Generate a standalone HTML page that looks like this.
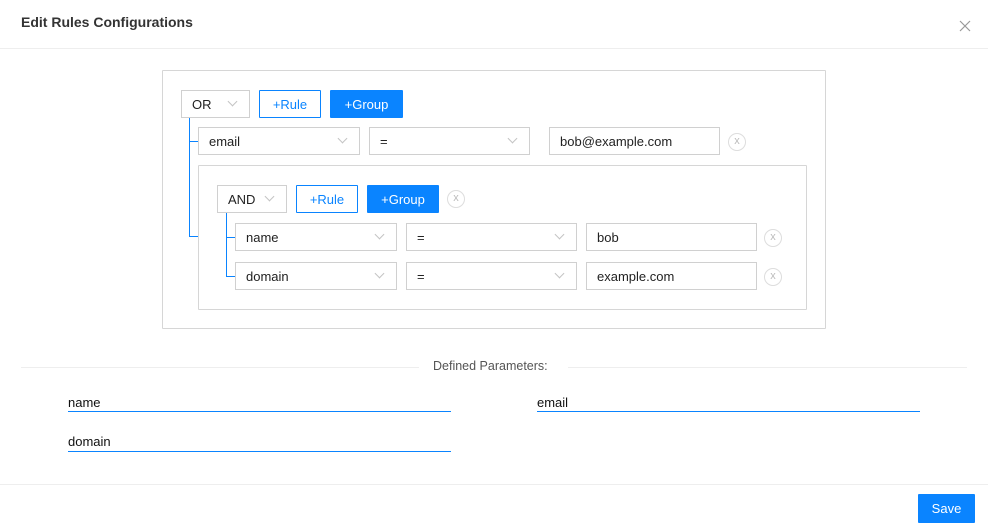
<!DOCTYPE html>
<html><head><meta charset="utf-8"><style>
*{box-sizing:border-box;margin:0;padding:0}
body{width:988px;height:531px;background:#fff;font-family:"Liberation Sans",sans-serif;font-size:13px;color:#333;position:relative;overflow:hidden}
.a{position:absolute}
.box{position:absolute;border:1px solid #d6d6d6;background:#fff;border-radius:1px}
.sel{position:absolute;border:1px solid #d0d0d0;height:28px;line-height:28px;padding-left:10px;color:#222}
.sel::after{content:"";position:absolute;right:13px;top:7px;width:6px;height:6px;border-right:1px solid #c4c4c4;border-bottom:1px solid #c4c4c4;transform:rotate(45deg)}
.btn{position:absolute;height:28px;line-height:27px;text-align:center;border:1px solid #0a84ff;color:#0a84ff;border-radius:1px}
.btnp{background:#0a84ff;color:#fff}
.inp{position:absolute;border:1px solid #d0d0d0;height:28px;line-height:28px;padding-left:10px;color:#222}
.x{position:absolute;width:18px;height:18px;border:1px solid #ddd;border-radius:50%;color:#bbb;font-size:11px;line-height:15px;text-align:center}
.vl{position:absolute;width:1px;background:#0a84ff}
.hl{position:absolute;height:1px;background:#0a84ff}
.pl{position:absolute;font-size:13px;color:#111}
.ul{position:absolute;height:1px;background:#0a84ff}
</style></head><body>
<div class="a" style="left:21px;top:14px;font-weight:bold;font-size:14px;color:#333">Edit Rules Configurations</div>
<svg class="a" style="left:959px;top:20px" width="12" height="12"><path d="M1 1L11 11M11 1L1 11" stroke="#999" stroke-width="1.2"/></svg>
<div class="a" style="left:0;top:48px;width:988px;height:1px;background:#eee"></div>

<div class="box" style="left:162px;top:70px;width:664px;height:259px"></div>
<div class="vl" style="left:189px;top:117px;height:120px"></div>
<div class="hl" style="left:189px;top:141px;width:9px"></div>
<div class="hl" style="left:189px;top:236px;width:9px"></div>
<div class="sel" style="left:181px;top:90px;width:69px">OR</div>
<div class="btn" style="left:259px;top:90px;width:62px">+Rule</div>
<div class="btn btnp" style="left:330px;top:90px;width:73px">+Group</div>
<div class="sel" style="left:198px;top:127px;width:162px">email</div>
<div class="sel" style="left:369px;top:127px;width:161px">=</div>
<div class="inp" style="left:549px;top:127px;width:171px">bob@example.com</div>
<div class="x" style="left:728px;top:133px">x</div>

<div class="box" style="left:198px;top:165px;width:609px;height:145px"></div>
<div class="vl" style="left:226px;top:213px;height:64px"></div>
<div class="hl" style="left:226px;top:237px;width:9px"></div>
<div class="hl" style="left:226px;top:276px;width:9px"></div>
<div class="sel" style="left:217px;top:185px;width:70px">AND</div>
<div class="btn" style="left:296px;top:185px;width:62px">+Rule</div>
<div class="btn btnp" style="left:367px;top:185px;width:72px">+Group</div>
<div class="x" style="left:447px;top:190px">x</div>
<div class="sel" style="left:235px;top:223px;width:162px">name</div>
<div class="sel" style="left:406px;top:223px;width:171px">=</div>
<div class="inp" style="left:586px;top:223px;width:171px">bob</div>
<div class="x" style="left:764px;top:229px">x</div>
<div class="sel" style="left:235px;top:262px;width:162px">domain</div>
<div class="sel" style="left:406px;top:262px;width:171px">=</div>
<div class="inp" style="left:586px;top:262px;width:171px">example.com</div>
<div class="x" style="left:764px;top:268px">x</div>

<div class="a" style="left:21px;top:367px;width:398px;height:1px;background:#eee"></div>
<div class="a" style="left:568px;top:367px;width:399px;height:1px;background:#eee"></div>
<div class="a" style="left:433px;top:359px;font-size:12.5px;color:#555">Defined Parameters:</div>
<div class="pl" style="left:68px;top:395px">name</div>
<div class="ul" style="left:68px;top:411px;width:383px"></div>
<div class="pl" style="left:537px;top:395px">email</div>
<div class="ul" style="left:537px;top:411px;width:383px"></div>
<div class="pl" style="left:68px;top:434px">domain</div>
<div class="ul" style="left:68px;top:451px;width:383px"></div>

<div class="a" style="left:0;top:484px;width:988px;height:1px;background:#eee"></div>
<div class="a" style="left:918px;top:494px;width:57px;height:29px;background:#0a84ff;color:#fff;line-height:29px;text-align:center;font-size:13px;border-radius:1px">Save</div>
</body></html>
